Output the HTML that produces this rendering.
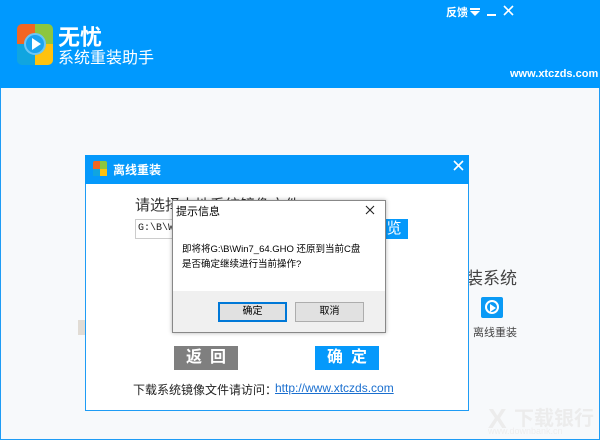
<!DOCTYPE html>
<html><head><meta charset="utf-8"><style>
*{margin:0;padding:0;box-sizing:border-box}
body{width:600px;height:440px;overflow:hidden;position:relative;background:#f7f9fb;font-family:"Liberation Sans","Noto Sans CJK SC",sans-serif}
.a{position:absolute}
</style></head><body>
<div class="a" style="left:0;top:0;width:600px;height:88px;background:#0099fe"></div>
<div class="a" style="left:0;top:88px;width:600px;height:352px;border:1px solid #1e9cf5;border-top:none"></div>
<div class="a" style="left:17px;top:24px;width:36px;height:41px;border-radius:5px;overflow:hidden">
 <div class="a" style="left:0;top:0;width:18px;height:20px;background:#f26622"></div>
 <div class="a" style="left:18px;top:0;width:18px;height:20px;background:#8dc63f"></div>
 <div class="a" style="left:0;top:20px;width:18px;height:21px;background:#10a5e0"></div>
 <div class="a" style="left:18px;top:20px;width:18px;height:21px;background:#ffc20e"></div>
 <div class="a" style="left:7px;top:9px;width:22px;height:22px;border-radius:50%;background:#1aa3f0;border:2px solid #6cc6f5"></div>
 <div class="a" style="left:15px;top:14px;width:0;height:0;border-left:9px solid #fff;border-top:6px solid transparent;border-bottom:6px solid transparent"></div>
</div>
<div class="a" style="left:58px;top:26px;color:#fff;font-size:22px;font-weight:bold;line-height:24px">无忧</div>
<div class="a" style="left:58px;top:50px;color:#fff;font-size:16px;line-height:18px">系统重装助手</div>
<div class="a" style="left:446px;top:4px;color:#fff;font-size:11px;font-weight:bold">反馈</div>
<div class="a" style="left:470px;top:8px;width:10px;height:2px;background:#fff"></div>
<div class="a" style="left:470px;top:11px;border-left:5px solid transparent;border-right:5px solid transparent;border-top:5px solid #fff"></div>
<div class="a" style="left:487px;top:14px;width:9px;height:2px;background:#fff"></div>
<svg class="a" style="left:503px;top:5px" width="11" height="11"><path d="M1 1L10 10M10 1L1 10" stroke="#fff" stroke-width="1.6"/></svg>
<div class="a" style="left:510px;top:68px;color:#fff;font-size:11px;font-weight:bold">www.xtczds.com</div>
<div class="a" style="left:466px;top:264px;color:#444;font-size:17px">装系统</div>
<div class="a" style="left:481px;top:297px;width:22px;height:21px;background:#0a9af5;border-radius:2px"></div>
<div class="a" style="left:485px;top:300px;width:14px;height:14px;border:2px solid #fff;border-radius:50%"></div>
<div class="a" style="left:490px;top:304px;border-left:6px solid #fff;border-top:4px solid transparent;border-bottom:4px solid transparent"></div>
<div class="a" style="left:473px;top:324px;color:#444;font-size:11px">离线重装</div>
<div class="a" style="left:78px;top:320px;width:7px;height:15px;background:#e1dcd5"></div>
<div class="a" style="left:488px;top:403px;color:#ececec;font-size:28px;font-weight:bold">X</div>
<div class="a" style="left:514px;top:402px;color:#ececec;font-size:20px;font-weight:bold">下载银行</div>
<div class="a" style="left:488px;top:426px;color:#eeeeee;font-size:9px">www.downbank.cn</div>
<div class="a" style="left:85px;top:155px;width:384px;height:256px;background:#fff;border:1px solid #1e9cf5"></div>
<div class="a" style="left:85px;top:155px;width:384px;height:29px;background:#0599fb"></div>
<div class="a" style="left:93px;top:161px;width:14px;height:15px;border-radius:2px;background:linear-gradient(90deg,#f26622 50%,#8dc63f 50%)"></div>
<div class="a" style="left:93px;top:169px;width:14px;height:7px;background:linear-gradient(90deg,#10a5e0 50%,#ffc20e 50%)"></div>
<div class="a" style="left:113px;top:161px;color:#fff;font-size:12px;font-weight:bold">离线重装</div>
<svg class="a" style="left:453px;top:160px" width="11" height="11"><path d="M1 1L10 10M10 1L1 10" stroke="#fff" stroke-width="1.6"/></svg>
<div class="a" style="left:135px;top:194px;color:#333;font-size:15px">请选择本地系统镜像文件</div>
<div class="a" style="left:135px;top:219px;width:250px;height:20px;border:1px solid #ccc;background:#fff;font-family:'Liberation Mono',monospace;font-size:10px;padding:3px 2px;color:#222">G:\B\Win7_64.GHO</div>
<div class="a" style="left:380px;top:219px;width:28px;height:20px;background:#0599fb;color:#fff;font-size:15px;text-align:center;line-height:20px">览</div>
<div class="a" style="left:174px;top:346px;width:64px;height:24px;background:#7f7f7f;color:#fff;font-size:16px;font-weight:bold;text-align:center;line-height:24px;letter-spacing:8px;padding-left:8px">返回</div>
<div class="a" style="left:315px;top:346px;width:64px;height:24px;background:#0599fb;color:#fff;font-size:16px;font-weight:bold;text-align:center;line-height:24px;letter-spacing:8px;padding-left:8px">确定</div>
<div class="a" style="left:133px;top:381px;color:#222;font-size:12px">下载系统镜像文件请访问：</div>
<div class="a" style="left:275px;top:381px;color:#1a6fcf;font-size:12px;text-decoration:underline">http://www.xtczds.com</div>
<div class="a" style="left:172px;top:200px;width:214px;height:133px;background:#fff;border:1px solid #888;box-shadow:0 0 4px rgba(0,0,0,.3)"></div>
<div class="a" style="left:173px;top:291px;width:212px;height:41px;background:#f0f0f0"></div>
<div class="a" style="left:176px;top:203px;color:#000;font-size:11px">提示信息</div>
<svg class="a" style="left:365px;top:205px" width="10" height="10"><path d="M1 1L9 9M9 1L1 9" stroke="#222" stroke-width="1.1"/></svg>
<div class="a" style="left:182px;top:242px;color:#000;font-size:9.5px;line-height:15px">即将将G:\B\Win7_64.GHO 还原到当前C盘<br>是否确定继续进行当前操作?</div>
<div class="a" style="left:218px;top:302px;width:69px;height:20px;background:#e1e1e1;border:2px solid #0078d7;font-size:10px;text-align:center;line-height:16px">确定</div>
<div class="a" style="left:295px;top:302px;width:69px;height:20px;background:#e1e1e1;border:1px solid #adadad;font-size:10px;text-align:center;line-height:18px">取消</div>
</body></html>
